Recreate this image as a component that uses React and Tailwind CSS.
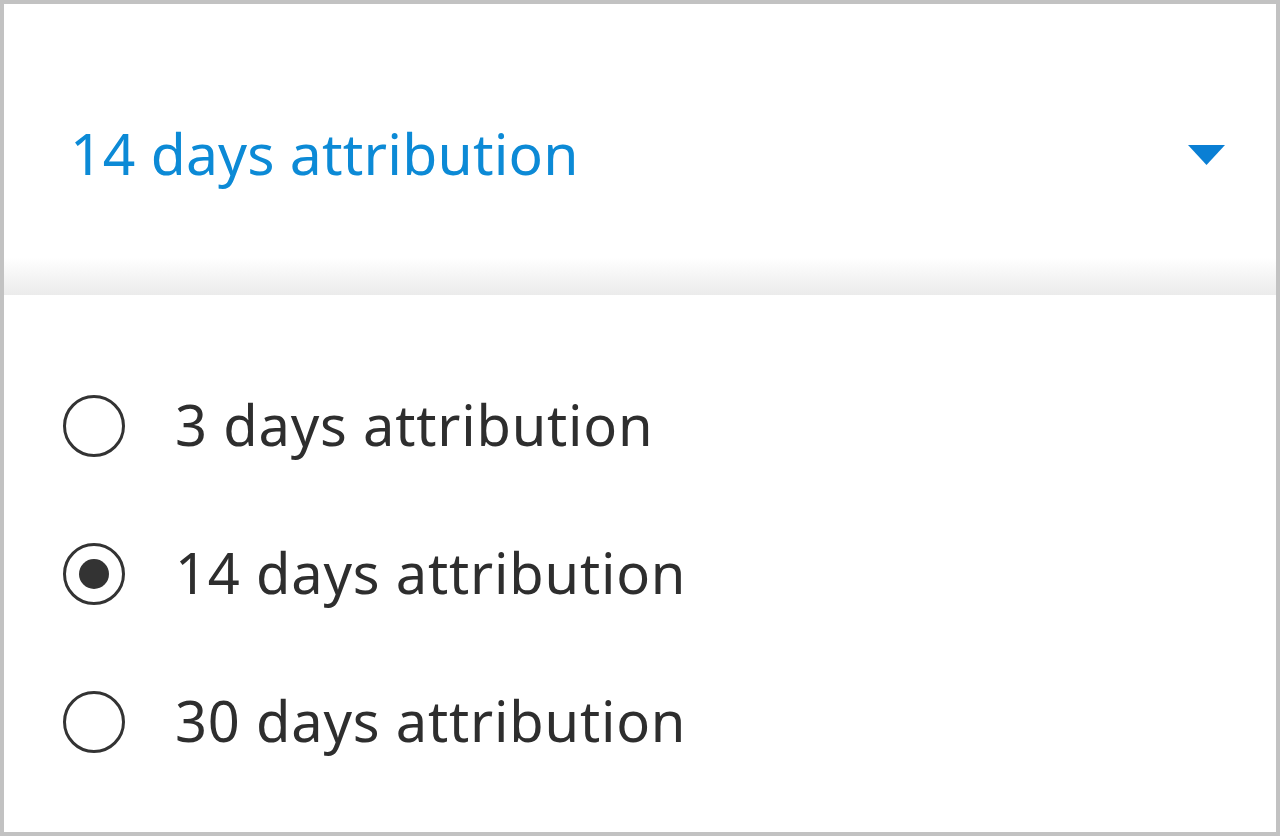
export default function App() {
  const options = [
    { label: "3 days attribution", checked: false },
    { label: "14 days attribution", checked: true },
    { label: "30 days attribution", checked: false },
  ];
  return (
    <div
      className="w-[1280px] h-[836px] border-4 border-[#c2c2c2] bg-white flex flex-col overflow-hidden"
      style={{ fontFamily: '"Noto Sans", "Open Sans", sans-serif' }}
    >
      <div className="h-[291px] shrink-0 flex items-start justify-between pl-[66px] pr-[51px] pt-[121px] bg-[linear-gradient(to_bottom,#ffffff_87%,#ebebeb)]">
        <span className="text-[57px] leading-none tracking-[0.2px] text-[#0c8ad6]">14 days attribution</span>
        <svg width="37" height="20" viewBox="0 0 37 20" className="mt-[20px]">
          <path d="M0 0 L37 0 L18.5 20 Z" fill="#0a7fd4" />
        </svg>
      </div>
      <div className="flex-1 bg-white flex flex-col pt-[57px] pl-[59px]">
        {options.map((o) => (
          <div key={o.label} className="h-[148px] flex items-center gap-[50px]">
            <span className="w-[62px] h-[62px] rounded-full border-[3px] border-[#333333] flex items-center justify-center shrink-0">
              {o.checked && <span className="w-[30px] h-[30px] rounded-full bg-[#333333]" />}
            </span>
            <span className="text-[56px] leading-none tracking-[0.8px] text-[#2e2e2e] pb-[4px]">{o.label}</span>
          </div>
        ))}
      </div>
    </div>
  );
}
